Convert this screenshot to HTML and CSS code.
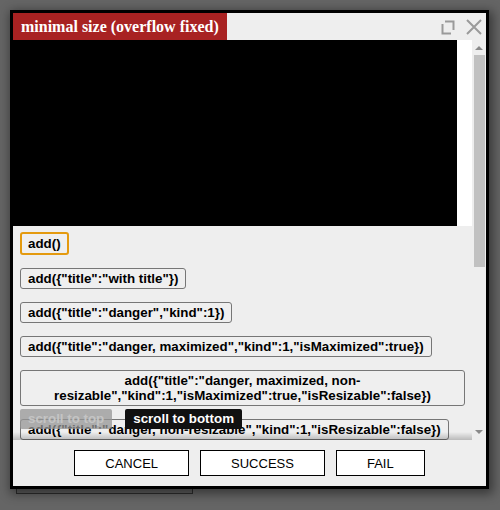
FILE: index.html
```html
<!DOCTYPE html>
<html>
<head>
<meta charset="utf-8">
<link rel="stylesheet" href="styles.css">
</head>
<body>
<div class="page">
  <div class="ghost"></div>
  <div class="dialog">
    <div class="titlebar">
      <div class="title">minimal size (overflow fixed)</div>
      <div class="controls">
        <svg class="icon" width="16" height="16" viewBox="0 0 16 16">
          <path d="M5 2.5 H13.5 V11" fill="none" stroke="#9a9a9a" stroke-width="2"/>
          <path d="M2.5 5 V14.5 H11" fill="none" stroke="#9a9a9a" stroke-width="2"/>
        </svg>
        <svg class="icon close" width="18" height="18" viewBox="0 0 18 18">
          <path d="M2 2 L16 16 M16 2 L2 16" fill="none" stroke="#9a9a9a" stroke-width="2"/>
        </svg>
      </div>
    </div>
    <div class="body">
      <div class="scroller">
        <div class="canvas-row"><div class="canvas"></div><div class="canvas-pad"></div></div>
        <div class="list">
          <button class="btn focused">add()</button>
          <button class="btn">add({"title":"with title"})</button>
          <button class="btn">add({"title":"danger","kind":1})</button>
          <button class="btn">add({"title":"danger, maximized","kind":1,"isMaximized":true})</button>
          <button class="btn wide">add({"title":"danger, maximized, non-resizable","kind":1,"isMaximized":true,"isResizable":false})</button>
          <button class="btn">add({"title":"danger, non-resizable","kind":1,"isResizable":false})</button>
        </div>
        <div class="floating">
          <span class="fbtn top">scroll to top</span>
          <span class="fbtn bottom">scroll to bottom</span>
        </div>
        <div class="fade"></div>
      </div>
      <div class="scrollbar">
        <div class="arrow up"></div>
        <div class="track"><div class="thumb"></div></div>
        <div class="arrow down"></div>
      </div>
    </div>
    <div class="footer">
      <button class="fb">CANCEL</button>
      <button class="fb">SUCCESS</button>
      <button class="fb">FAIL</button>
    </div>
  </div>
</div>
</body>
</html>
```

FILE: styles.css
```css
html, body {
  margin: 0;
  padding: 0;
  background: #656565;
  width: 500px;
  height: 510px;
  overflow: hidden;
}

.page {
  position: relative;
  padding: 10px;
}

.ghost {
  position: absolute;
  left: 16px;
  top: 470px;
  width: 175px;
  height: 22px;
  border: 1px solid #2e2e2e;
  background: #5e5e5e;
}

.dialog {
  position: relative;
  width: 473px;
  height: 473px;
  border: 3px solid #000;
  background: #eeeeee;
  display: flex;
  flex-direction: column;
  box-shadow: 2px 3px 10px 2px rgba(0, 0, 0, 0.45);
}

.titlebar {
  height: 27px;
  display: flex;
  justify-content: space-between;
  align-items: stretch;
  flex: none;
}

.title {
  background: #a82222;
  color: #ffffff;
  font-family: "Liberation Serif", serif;
  font-weight: bold;
  font-size: 16px;
  line-height: 27px;
  padding: 0 8px;
}

.controls {
  display: flex;
  align-items: center;
  gap: 9px;
  padding-right: 3px;
}

.icon {
  display: block;
}

.close {
  margin-top: 1px;
}

.body {
  height: 400px;
  display: flex;
  flex: none;
}

.scroller {
  position: relative;
  width: 459px;
  overflow: hidden;
}

.canvas-row {
  display: flex;
  height: 186px;
}

.canvas {
  width: 444px;
  background: #000;
}

.canvas-pad {
  flex: 1;
  background: #fff;
}

.list {
  display: flex;
  flex-direction: column;
  align-items: flex-start;
  gap: 13px;
  padding: 6px 7px;
}

.btn {
  font-family: "Liberation Sans", Arial, sans-serif;
  font-weight: bold;
  font-size: 13.333px;
  line-height: 15px;
  color: #000;
  background: #efefef;
  border: 1px solid #767676;
  border-radius: 3px;
  padding: 2px 7px;
  margin: 0;
  text-align: center;
}

.btn.focused {
  border: 2px solid #e49a0f;
  padding: 2px 6px;
}

.btn.wide {
  align-self: stretch;
}

.floating {
  position: absolute;
  left: 7px;
  bottom: 11px;
  display: flex;
  gap: 13px;
}

.fbtn {
  font-family: "Liberation Sans", Arial, sans-serif;
  font-weight: bold;
  font-size: 13.333px;
  line-height: 20px;
  padding: 0 8px;
  border-radius: 2px;
}

.fbtn.top {
  background: rgba(150, 150, 150, 0.75);
  color: #c4c4c4;
}

.fbtn.bottom {
  background: #111;
  color: #fff;
}

.fade {
  position: absolute;
  left: 0;
  right: 0;
  bottom: 0;
  height: 8px;
  background: linear-gradient(rgba(0, 0, 0, 0), rgba(0, 0, 0, 0.22));
}

.scrollbar {
  width: 14px;
  display: flex;
  flex-direction: column;
  align-items: center;
  background: #eeeeee;
}

.arrow {
  width: 0;
  height: 0;
  border-left: 4px solid transparent;
  border-right: 4px solid transparent;
  flex: none;
}

.arrow.up {
  border-bottom: 4px solid #8a8a8a;
  margin-top: 6px;
}

.arrow.down {
  border-top: 4px solid #8a8a8a;
  margin-bottom: 6px;
}

.track {
  flex: 1;
  width: 100%;
  padding-top: 5px;
}

.thumb {
  margin-left: 2px;
  width: 11px;
  height: 212px;
  background: #c1c1c1;
}

.footer {
  flex: 1;
  display: flex;
  justify-content: center;
  align-items: center;
  gap: 11px;
}

.fb {
  font-family: "Liberation Sans", Arial, sans-serif;
  font-size: 13px;
  height: 26px;
  padding: 0 30px;
  margin: 0;
  border: 1px solid #000;
  border-radius: 0;
  background: #fff;
  color: #000;
}
```
